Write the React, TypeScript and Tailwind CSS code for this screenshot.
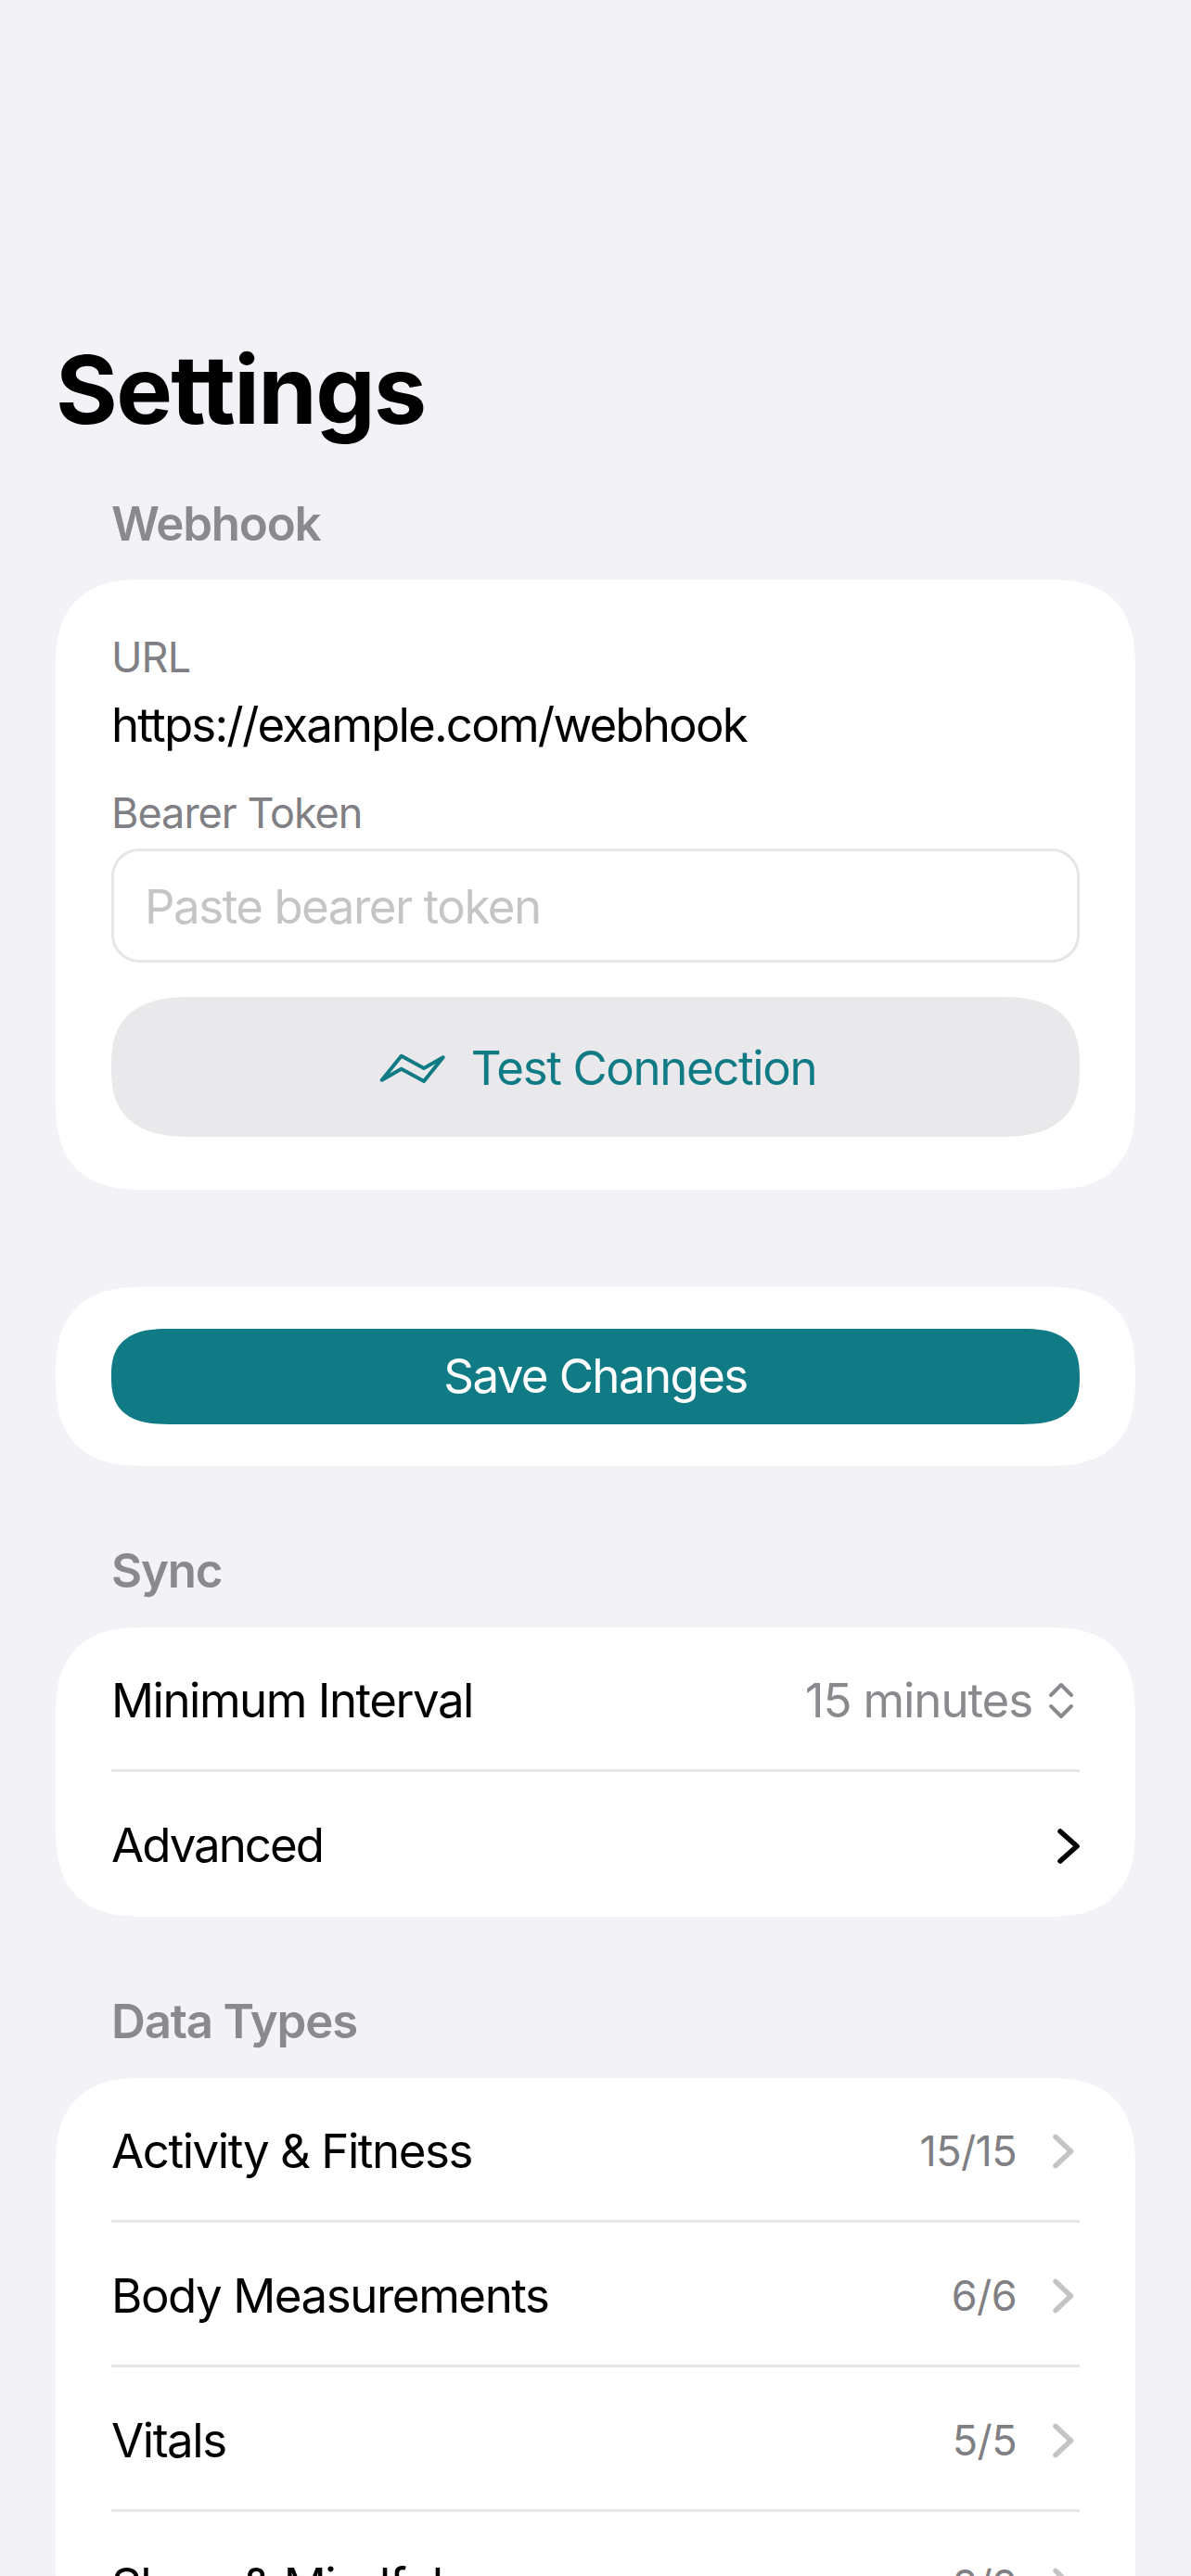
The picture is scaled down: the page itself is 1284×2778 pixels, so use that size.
import React from 'react';

const font = { fontFamily: 'Inter, "Liberation Sans", sans-serif' };

function GrayChevron() {
  return (
    <svg width="24" height="40" viewBox="0 0 24 40" fill="none" className="block">
      <path d="M4 4.5 L20.5 20 L4 35.5" stroke="#c4c4c7" strokeWidth="5.5" strokeLinecap="round" strokeLinejoin="round" />
    </svg>
  );
}

function Row({ label, value, last }: { label: string; value: string; last?: boolean }) {
  return (
    <div className={`h-[156px] pt-[5px] flex items-center justify-between ${last ? '' : 'border-b-[3px] border-[#e6e6e9]'}`}>
      <span className="text-[51px] tracking-[-1.45px] text-black">{label}</span>
      <div className="flex items-center gap-[38px] pr-[6px]">
        <span className="text-[45px] tracking-[-0.6px] text-[#808084]">{value}</span>
        <GrayChevron />
      </div>
    </div>
  );
}

function SectionHeader({ children, className }: { children: React.ReactNode; className?: string }) {
  return <h2 className={`pl-[60px] text-[51px] leading-[60px] font-semibold tracking-[-1.2px] text-[#8a8a8e] ${className ?? ''}`}>{children}</h2>;
}

export default function App() {
  return (
    <div style={font} className="h-[2778px] overflow-hidden bg-[#f2f2f7] px-[60px] pt-[360px]">
      <h1 className="text-[102px] leading-[120px] font-bold tracking-[-1.6px] text-black">Settings</h1>

      <SectionHeader className="mt-[55px] mb-[30px]">Webhook</SectionHeader>
      <section className="h-[658px] rounded-[96px] [corner-shape:superellipse(1.38)] bg-white px-[60px] pt-[56px]">
        <div className="text-[45px] leading-[56px] tracking-[-0.9px] text-[#808084]">URL</div>
        <div className="mt-[15px] text-[51px] leading-[60px] tracking-[-1.8px] text-black">https://example.com/webhook</div>
        <div className="mt-[37px] text-[45px] leading-[56px] tracking-[-1px] text-[#808084]">Bearer Token</div>
        <div className="mt-[10px] h-[123px] pt-[3px] flex items-center rounded-[30px] border-[3px] border-[#e6e6e9] pl-[33px]">
          <span className="text-[51px] tracking-[-1.5px] text-[#c5c5c7]">Paste bearer token</span>
        </div>
        <button className="mt-[37px] w-full h-[151px] pt-[3px] pl-[5px] flex items-center justify-center gap-[27px] rounded-[90px/75px] [corner-shape:superellipse(1.4)] bg-[#e9e9eb] text-[51px] tracking-[-1.4px] text-[#117b85]">
          <svg width="72" height="32" viewBox="0 0 72 32" fill="none">
            <path d="M2.7 28.7 L23.7 2.7 L48 16 L68.7 4.3 L48 30 L23.7 16.7 Z" stroke="#117b85" strokeWidth="4" strokeLinecap="round" strokeLinejoin="round" />
          </svg>
          Test Connection
        </button>
      </section>

      <section className="mt-[105px] h-[193px] rounded-[96px] [corner-shape:superellipse(1.38)] bg-white px-[60px] pt-[45px]">
        <button className="w-full h-[103px] rounded-[62px/51.5px] [corner-shape:superellipse(1.4)] bg-[#117b85] text-[51px] tracking-[-1.6px] text-white">
          Save Changes
        </button>
      </section>

      <SectionHeader className="mt-[83px] mb-[31px]">Sync</SectionHeader>
      <section className="h-[312px] rounded-[96px] [corner-shape:superellipse(1.38)] bg-white px-[60px]">
        <div className="h-[156px] pt-[5px] flex items-center justify-between border-b-[3px] border-[#e6e6e9]">
          <span className="text-[51px] tracking-[-1.5px] text-black">Minimum Interval</span>
          <div className="flex items-center gap-[17px] pr-[6px]">
            <span className="text-[51px] tracking-[-1.1px] text-[#8a8a8e]">15 minutes</span>
            <svg width="28" height="40" viewBox="0 0 28 40" fill="none">
              <path d="M3 14 L14 3 L25 14 M3 26 L14 37 L25 26" stroke="#8a8a8e" strokeWidth="4" strokeLinecap="round" strokeLinejoin="round" />
            </svg>
          </div>
        </div>
        <div className="h-[156px] pt-[3px] flex items-center justify-between">
          <span className="text-[51px] tracking-[-2px] text-black">Advanced</span>
          <svg width="24" height="40" viewBox="0 0 24 40" fill="none">
            <path d="M3 4 L21 20 L3 36" stroke="#000000" strokeWidth="5.5" strokeLinecap="round" strokeLinejoin="round" />
          </svg>
        </div>
      </section>

      <SectionHeader className="mt-[83px] mb-[31px]">Data Types</SectionHeader>
      <section className="rounded-[96px] [corner-shape:superellipse(1.38)] bg-white px-[60px]">
        <Row label="Activity & Fitness" value="15/15" />
        <Row label="Body Measurements" value="6/6" />
        <Row label="Vitals" value="5/5" />
        <Row label="Sleep & Mindfulness" value="2/2" />
      </section>
    </div>
  );
}
